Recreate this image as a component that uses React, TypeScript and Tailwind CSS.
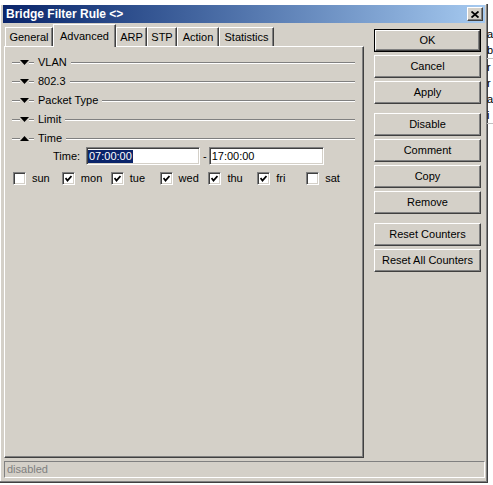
import React from 'react'

// classic 3D edges
const raised =
  'border border-t-white border-l-white border-r-[#404040] border-b-[#404040] shadow-[inset_-1px_-1px_#808080]'
const sunken =
  'border border-t-[#808080] border-l-[#808080] border-r-white border-b-white shadow-[inset_1px_1px_#404040,inset_-1px_-1px_#d4d0c8]'

const tabs = [
  { label: 'General', w: 'w-[48px]' },
  { label: 'Advanced', w: 'w-[63px]', active: true },
  { label: 'ARP', w: 'w-[31px]' },
  { label: 'STP', w: 'w-[30px]' },
  { label: 'Action', w: 'w-[42px]' },
  { label: 'Statistics', w: 'w-[55px]' },
]

const sections = [
  { label: 'VLAN' },
  { label: '802.3' },
  { label: 'Packet Type' },
  { label: 'Limit' },
  { label: 'Time', open: true },
]

const days = [
  { label: 'sun', on: false },
  { label: 'mon', on: true },
  { label: 'tue', on: true },
  { label: 'wed', on: true },
  { label: 'thu', on: true },
  { label: 'fri', on: true },
  { label: 'sat', on: false },
]

const buttonGroups = [
  ['OK', 'Cancel', 'Apply'],
  ['Disable', 'Comment', 'Copy', 'Remove'],
  ['Reset Counters', 'Reset All Counters'],
]

function Etch({ className = '' }: { className?: string }) {
  return <div className={`h-[2px] border-t border-t-[#808080] border-b border-b-white ${className}`} />
}

function SectionHeader({ label, open }: { label: string; open?: boolean }) {
  return (
    <div className="flex h-[19px] items-center">
      <Etch className="w-[8px]" />
      <svg width="9" height="5" viewBox="0 0 9 5" className="shrink-0">
        {open ? <polygon points="0,5 9,5 4.5,0" fill="#000" /> : <polygon points="0,0 9,0 4.5,5" fill="#000" />}
      </svg>
      <Etch className="w-[5px]" />
      <span className="ml-[4px] mr-[4px] leading-none">{label}</span>
      <Etch className="flex-1" />
    </div>
  )
}

function CheckBox({ on }: { on: boolean }) {
  return (
    <div className={`flex h-[13px] w-[13px] shrink-0 items-center justify-center bg-white ${sunken}`}>
      {on && (
        <svg width="7" height="7" viewBox="0 0 7 7">
          <polyline points="0.5,3 2.5,5.5 6.5,1" fill="none" stroke="#000" strokeWidth="1.8" />
        </svg>
      )}
    </div>
  )
}

function Button({ label, isDefault }: { label: string; isDefault?: boolean }) {
  const inner = (
    <div className={`flex h-full w-full items-center justify-center bg-[#d4d0c8] ${raised}`}>{label}</div>
  )
  if (isDefault) {
    return <div className="h-[23px] w-[107px] border border-black">{inner}</div>
  }
  return <div className="h-[23px] w-[107px]">{inner}</div>
}

export default function App() {
  return (
    <div className="relative flex h-[485px] w-[493px] overflow-hidden bg-white font-['Liberation_Sans',Arial,sans-serif] text-[11px] text-black">
      {/* dialog window */}
      <div className="mt-[4px] flex h-[479px] w-[488px] shrink-0 flex-col border-r border-b border-r-[#404040] border-b-[#404040] bg-[#d4d0c8] pl-[3px] pr-[2px] pt-[1px] shadow-[inset_-1px_-1px_#808080,inset_1px_1px_#ffffff]">
        {/* title bar */}
        <div className="flex h-[18px] items-center bg-gradient-to-r from-[#0a246a] to-[#a6caf0] pl-[3px] pr-[2px]">
          <span className="flex-1 text-[12px] font-bold text-white">Bridge Filter Rule &lt;&gt;</span>
          <div className={`flex h-[14px] w-[16px] items-center justify-center bg-[#d4d0c8] ${raised}`}>
            <svg width="8" height="7" viewBox="0 0 8 7">
              <path d="M0.5 0.5 L7.5 6.5 M7.5 0.5 L0.5 6.5" stroke="#000" strokeWidth="1.8" />
            </svg>
          </div>
        </div>

        <div className="mt-[1px] flex flex-1">
          {/* left column: tabs and panel */}
          <div className="ml-[1px] flex w-[360px] flex-col">
            <div className="relative z-10 flex h-[22px] items-end pl-[1px]">
              {tabs.map((t) =>
                t.active ? (
                  <div
                    key={t.label}
                    className={`-mb-px flex h-[23px] items-start justify-center border-t border-l border-t-white border-l-white border-r border-r-[#404040] bg-[#d4d0c8] pt-[3px] shadow-[inset_-1px_0_#808080] ${t.w}`}
                  >
                    {t.label}
                  </div>
                ) : (
                  <div
                    key={t.label}
                    className={`flex h-[19px] items-center justify-center border-t border-l border-t-white border-l-white border-r border-r-[#404040] shadow-[inset_-1px_0_#808080] ${t.w}`}
                  >
                    {t.label}
                  </div>
                ),
              )}
            </div>
            <div className={`h-[412px] bg-[#d4d0c8] pl-[7px] pr-[8px] pt-[6px] ${raised}`}>
              {sections.map((s) => (
                <SectionHeader key={s.label} label={s.label} open={s.open} />
              ))}
              <div className="mt-[-1px] flex h-[18px] items-center">
                <span className="ml-[41px] w-[33px]">Time:</span>
                <div className={`flex h-[18px] w-[114px] items-center bg-white pl-[1px] ${sunken}`}>
                  <span className="bg-[#0a246a] px-[1px] leading-[13px] text-white">07:00:00</span>
                </div>
                <span className="ml-[3px] mr-[2px]">-</span>
                <div className={`flex h-[18px] w-[115px] items-center bg-white pl-[2px] ${sunken}`}>17:00:00</div>
              </div>
              <div className="mt-[7px] flex h-[13px] items-center pl-[1px]">
                {days.map((d) => (
                  <div key={d.label} className="flex w-[49px] items-center gap-[6px]">
                    <CheckBox on={d.on} />
                    <span>{d.label}</span>
                  </div>
                ))}
              </div>
            </div>
          </div>

          {/* right column: action buttons */}
          <div className="ml-[10px] flex flex-col gap-[9px] pt-[5px]">
            {buttonGroups.map((g, gi) => (
              <div key={gi} className="flex flex-col gap-[3px]">
                {g.map((b) => (
                  <Button key={b} label={b} isDefault={b === 'OK'} />
                ))}
              </div>
            ))}
          </div>
        </div>

        {/* status bar */}
        <div className={`mb-[5px] ml-[1px] mt-[3px] flex h-[17px] w-[481px] items-center pl-[2px] text-[#808080] ${sunken} shadow-none`}>
          disabled
        </div>
      </div>

      {/* window behind, peeking out on the right */}
      <div className="flex flex-col pt-[26px] text-[11px] leading-[16px] text-black">
        <span className="-ml-[1px]">a</span>
        <span className="-ml-[1px] border-b border-[#c0c0c0]">b</span>
        <span className="-ml-[1px]">r</span>
        <span className="-ml-[1px]">r</span>
        <span className="-ml-[1px]">a</span>
        <span className="-ml-[1px] border-b border-[#c0c0c0]">i</span>
      </div>
    </div>
  )
}
